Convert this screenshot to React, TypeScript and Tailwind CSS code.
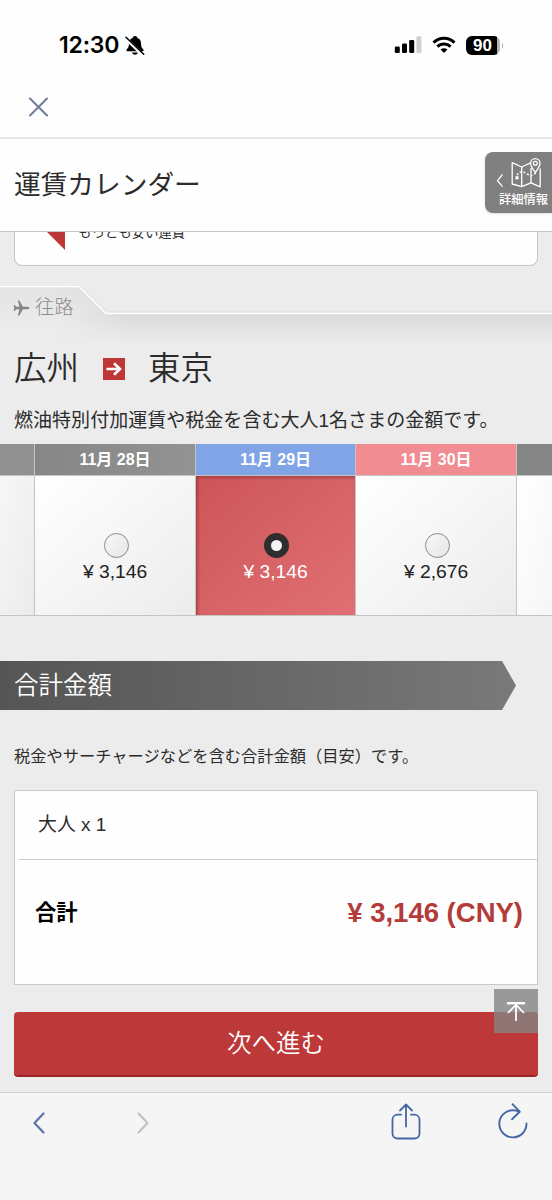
import { clsx } from 'clsx';
import type { ReactNode } from 'react';

interface FareDay {
  id: string;
  label: string;
  price: string;
  headerClass: string;
  bodyClass: string;
  selected?: boolean;
}

const fareDays: FareDay[] = [
  { id: 'prev', label: '', price: '', headerClass: 'bg-[#919191]', bodyClass: 'from-[#f7f7f7] to-[#ebebeb]' },
  {
    id: '28',
    label: '11月 28日',
    price: '¥ 3,146',
    headerClass: 'bg-linear-to-r from-[#868686] to-[#939393]',
    bodyClass: 'from-white to-[#ececec] text-[#222]',
  },
  {
    id: '29',
    label: '11月 29日',
    price: '¥ 3,146',
    headerClass: 'bg-[#80a4e6]',
    bodyClass: 'from-[#cd5558] to-[#e07074] text-white shadow-[inset_2px_2px_3px_rgba(90,20,20,0.35)]',
    selected: true,
  },
  {
    id: '30',
    label: '11月 30日',
    price: '¥ 2,676',
    headerClass: 'bg-[#f08c92]',
    bodyClass: 'from-white to-[#ececec] text-[#222]',
  },
  { id: 'next', label: '', price: '', headerClass: 'bg-[#868686]', bodyClass: 'from-white to-[#f6f6f6]' },
];

function StatusBar() {
  return (
    <div className="flex h-[76px] items-start justify-between bg-[#fefefe] pt-[33px] pr-[49px] pl-[59px]">
      <div className="flex h-6 items-center gap-[6px]">
        <span className="font-['Inter',sans-serif] text-[23px] font-semibold tracking-[-0.2px] text-black">12:30</span>
        <svg width="20" height="21" viewBox="0 0 20 21">
          <path
            d="M10 1c-1.300 0-2.200.8-2.400 1.900C5.200 3.800 4 5.700 4 8.200c0 3.600-.9 4.800-2.200 6.100-.8.8-.6 2 .7 2h15c1.300 0 1.500-1.200.7-2-1.300-1.300-2.200-2.500-2.200-6.100 0-2.500-1.200-4.400-3.600-5.300C12.200 1.800 11.300 1 10 1zM7.100 17.500c.3 1.400 1.400 2.200 2.900 2.200s2.600-.8 2.900-2.200z"
            fill="#000"
          />
          <path d="M0.500 3.200L18 20.200" stroke="#fefefe" strokeWidth="3.200" />
          <path d="M1 2.200L18.700 19.300" stroke="#000" strokeWidth="1.500" strokeLinecap="round" />
        </svg>
      </div>
      <div className="flex h-6 items-center">
        <svg width="28" height="18" viewBox="0 0 28 18">
          <rect x="0.800" y="10.500" width="5" height="6.500" rx="1.300" fill="#000" />
          <rect x="8" y="7.500" width="5" height="9.500" rx="1.300" fill="#000" />
          <rect x="15.200" y="4" width="5" height="13" rx="1.300" fill="#000" />
          <rect x="22.400" y="0.200" width="5" height="16.800" rx="1.300" fill="#cfcfcf" />
        </svg>
        <svg className="ml-2.5" width="24" height="18" viewBox="0 0 24 18">
          <g fill="none" stroke="#000" strokeWidth="3">
            <path d="M1.500 6.600C7.300 0.900 16.700 0.900 22.500 6.600" />
            <path d="M5.400 10.600C9 7.100 15 7.100 18.600 10.600" />
          </g>
          <path d="M8.500 13.500C10.500 11.700 13.500 11.700 15.500 13.500L12 17.100z" fill="#000" />
        </svg>
        <div className="ml-2.5 flex h-[19px] w-[34px] items-center justify-center rounded-[6px] bg-linear-to-r from-black from-92% to-[#b5b5b5] to-92%">
          <span className="pt-px text-[17px] leading-none font-bold text-white">90</span>
        </div>
        <div className="ml-[2px] h-[5px] w-[1.500px] rounded-r-full bg-[#a8a8a8]" />
      </div>
    </div>
  );
}

function DetailTab() {
  return (
    <button className="mt-[13px] flex h-[61px] w-[67px] flex-col rounded-l-[8px] bg-[#808080] pl-[10px] shadow-sm">
      <svg width="54" height="38" viewBox="0 0 54 38" fill="none" stroke="#fff">
        <path d="M7.500 22.500L2.500 28.700l5 6" strokeWidth="1.200" />
        <g strokeWidth="1.300" strokeLinejoin="round">
          <path d="M35.500 10.800L26.700 15 17.200 10.700V32l9.500 2.700 9.300-3.900 9.200 4V16.500" />
          <path d="M26.700 15v19.500M36 16v15" />
          <path d="M40.300 20.500c-2.800-4.200-4.700-6.600-4.700-9.100a4.700 4.700 0 0 1 9.400 0c0 2.500-1.900 4.900-4.700 9.100z" fill="#808080" />
          <circle cx="40.300" cy="11.300" r="1.900" />
        </g>
        <path d="M22 23l2.500-2.800 3.500-.7 4 2.500 4 1.800 5.500-3" strokeWidth="1.500" strokeDasharray="2 2" />
        <path d="M20.600 24.400l2.800 2.800m0-2.800l-2.800 2.800" strokeWidth="1.500" />
      </svg>
      <span className="mt-px text-[12.300px] leading-[18px] font-medium whitespace-nowrap text-white">詳細情報</span>
    </button>
  );
}

function RouteTab() {
  return (
    <div className="relative h-[58px]">
      <svg className="absolute inset-0" width="552" height="58" viewBox="0 0 552 58" fill="none">
        <defs>
          <linearGradient id="fade" x1="0" y1="27" x2="0" y2="58" gradientUnits="userSpaceOnUse">
            <stop stopColor="#dadada" />
            <stop offset="1" stopColor="#ececec" />
          </linearGradient>
          <linearGradient id="tabFade" x1="62" y1="38" x2="86" y2="10" gradientUnits="userSpaceOnUse">
            <stop stopColor="#dcdcdc" stopOpacity="0" />
            <stop offset="1" stopColor="#dcdcdc" />
          </linearGradient>
          <linearGradient id="topFade" x1="0" y1="0" x2="0" y2="40" gradientUnits="userSpaceOnUse">
            <stop stopColor="#e3e3e3" />
            <stop offset="1" stopColor="#ececec" />
          </linearGradient>
          <linearGradient id="sideMask" x1="60" y1="0" x2="125" y2="0" gradientUnits="userSpaceOnUse">
            <stop stopColor="#000" />
            <stop offset="1" stopColor="#fff" />
          </linearGradient>
          <mask id="side" maskUnits="userSpaceOnUse" x="0" y="0" width="552" height="58">
            <rect width="552" height="58" fill="url(#sideMask)" />
          </mask>
        </defs>
        <path d="M0 0H79L106 27V58H0z" fill="url(#topFade)" />
        <path d="M0 0H79L106 27H0z" fill="url(#tabFade)" mask="url(#side)" />
        <path d="M0 27H552V58H0z" fill="url(#fade)" mask="url(#side)" />
        <path d="M0 -1H80L107 26H552" stroke="#dfdfdf" />
        <path d="M0 0.500H79L106 27.500H552" stroke="#fff" strokeWidth="1.500" />
      </svg>
      <div className="relative flex h-[43px] items-center pl-[13px] text-[19.300px] font-light text-[#8c8c8c]">
        <svg className="mr-[5px]" width="17" height="18" viewBox="0 0 17 18">
          <path
            d="M16.500 9c0-.8-1.400-1.200-3-1.200H10L6.300 1.500H4.800l1.700 6.300H3.200L1.600 6H.6l.7 3-.7 3h1l1.600-1.800h3.300L4.800 16.500h1.500L10 10.200h3.500c1.600 0 3-.4 3-1.200z"
            fill="#858585"
          />
        </svg>
        <span className="pt-[2px]">往路</span>
      </div>
    </div>
  );
}

function Radio({ checked }: { checked?: boolean }) {
  if (checked) {
    return (
      <span className="flex size-[25px] items-center justify-center rounded-full bg-[#2e2e2e]">
        <span className="size-[11px] rounded-full bg-[#f4f4f4]" />
      </span>
    );
  }
  return <span className="size-[25px] rounded-full border border-[#8a8a8a] bg-linear-to-br from-[#f8f8f8] to-[#e6e6e6]" />;
}

function FareCell({ day }: { day: FareDay }) {
  return (
    <div className="border-r border-[#c4c4c4] last:border-r-0">
      <div className={clsx('flex h-[31px] items-center justify-center pt-px text-[16px] font-bold text-white', day.headerClass)}>
        {day.label}
      </div>
      <div className={clsx('flex h-[141px] flex-col items-center border-y border-[#c4c4c4] bg-linear-to-br pt-[57px]', day.bodyClass)}>
        {day.price ? (
          <>
            <span className="ml-[2px] flex">
              <Radio checked={day.selected} />
            </span>
            <span className="mt-[2px] text-[19.250px] leading-6">{day.price}</span>
          </>
        ) : null}
      </div>
    </div>
  );
}

function Note({ className, children }: { className: string; children: ReactNode }) {
  return <p className={clsx('flex items-center pl-[14px] whitespace-nowrap text-[#2b2b2b]', className)}>{children}</p>;
}

function BrowserBar() {
  return (
    <div className="flex h-[108px] items-start border-t border-[#d2d2d2] bg-[#f5f5f6] pt-[8px]">
      <svg className="ml-[32px]" width="14" height="44" viewBox="0 0 14 44" fill="none">
        <path d="M11.500 12.500L2.500 22l9 9.500" stroke="#5c76ab" strokeWidth="2.300" strokeLinecap="round" strokeLinejoin="round" />
      </svg>
      <svg className="ml-[90px]" width="14" height="44" viewBox="0 0 14 44" fill="none">
        <path d="M2.500 12.500l9 9.500-9 9.500" stroke="#c3c3c4" strokeWidth="2.300" strokeLinecap="round" strokeLinejoin="round" />
      </svg>
      <svg className="ml-[240px]" width="32" height="44" viewBox="0 0 32 44" fill="none" stroke="#4467a4" strokeWidth="1.800">
        <path d="M11.800 13.700H7.500a5 5 0 0 0-5 5V32.500a5 5 0 0 0 5 5h17a5 5 0 0 0 5-5V18.700a5 5 0 0 0-5-5h-4.300" />
        <path d="M16 25.500V4M10 9.500l6-6 6 6" strokeLinecap="round" strokeLinejoin="round" />
      </svg>
      <svg className="ml-[75px]" width="32" height="44" viewBox="0 0 32 44" fill="none" stroke="#4467a4" strokeWidth="1.900">
        <path d="M29.500 22.500A13.600 13.600 0 1 1 16 9.200c2.300 0 4.300.5 6.300 1.600" strokeLinecap="round" />
        <path d="M15.500 3.200l7.200 7.500-7.700 7.500" strokeLinecap="round" strokeLinejoin="round" />
      </svg>
    </div>
  );
}

export default function App() {
  return (
    <div className="flex h-[1200px] w-[552px] flex-col overflow-hidden bg-[#ececec] font-['Liberation_Sans','Noto_Sans_CJK_JP',sans-serif] text-[#2b2b2b]">
      <StatusBar />
      <div className="h-[63px] border-b-2 border-[#e5e5e5] bg-[#fefefe] pt-[21px] pl-[28px]">
        <svg width="21" height="20" viewBox="0 0 21 20">
          <path d="M2 1.500l17 17M19 1.500l-17 17" stroke="#6f7c96" strokeWidth="2" strokeLinecap="round" />
        </svg>
      </div>

      <header className="flex h-[93px] justify-between border-b border-[#c6c6c6] bg-[#fefefe] pl-[14px]">
        <h1 className="flex h-[92px] items-center text-[26.700px]">運賃カレンダー</h1>
        <DetailTab />
      </header>

      <div className="mx-[14px] flex h-[34px] rounded-b-[8px] border border-t-0 border-[#c6c6c6] bg-[#fefefe] pl-[32px]">
        <svg width="18" height="18" viewBox="0 0 18 18">
          <path d="M0 0h18v18z" fill="#bf3636" />
        </svg>
        <div className="h-[12px] overflow-hidden pl-[13px]">
          <p className="-mt-[9px] text-[13.400px] leading-5">もっとも安い運賃</p>
        </div>
      </div>

      <div className="pt-[20px]">
        <RouteTab />
      </div>

      <div className="flex h-[48px] items-center pl-[14px] text-[32.500px] font-[350] text-[#2b2b2b]">
        <span className="pt-[3px]">広州</span>
        <span className="mt-[2px] ml-[24px] flex size-[22px] items-center justify-center bg-[#bf3636]">
          <svg width="16" height="14" viewBox="0 0 16 14" fill="none" stroke="#fff" strokeWidth="2.600">
            <path d="M0.500 7H14M8 1.200L14 7l-6 5.800" />
          </svg>
        </span>
        <span className="ml-[23px] pt-[3px]">東京</span>
      </div>
      <Note className="h-[52px] pt-[7px] text-[19.050px]">燃油特別付加運賃や税金を含む大人1名さまの金額です。</Note>

      <div className="grid h-[172px] grid-cols-[35px_161px_160px_161px_35px]">
        {fareDays.map((day) => (
          <FareCell key={day.id} day={day} />
        ))}
      </div>

      <h2 className="mt-[45px] flex h-[49px] w-[516px] items-center bg-linear-to-r from-[#555] to-[#797979] pt-[2px] pl-[14px] text-[24.500px] font-[350] text-white [clip-path:polygon(0_0,502px_0,100%_50%,502px_100%,0_100%)]">
        合計金額
      </h2>
      <Note className="h-[80px] pt-[12px] text-[16.250px]">税金やサーチャージなどを含む合計金額（目安）です。</Note>

      <div className="mx-[14px] h-[195px] border border-[#c9c9c9] bg-[#fefefe]">
        <div className="ml-[4px] flex h-[69px] items-center border-b border-[#c9c9c9] pt-px pl-[19px] text-[18.900px]">大人 x 1</div>
        <div className="flex h-[106px] items-center justify-between pr-[14px] pl-[20px] font-bold">
          <span className="pt-[2px] text-[21.300px] text-black">合計</span>
          <span className="text-[27.500px] text-[#b33b38]">¥ 3,146 (CNY)</span>
        </div>
      </div>

      <div className="relative mx-[14px] mt-[27px] mb-[15px]">
        <button className="flex h-[65px] w-full items-center justify-center rounded-[4px] border-b-2 border-[#982426] bg-[#bd3939] pt-[2px] text-[24.500px] font-[350] text-white">
          次へ進む
        </button>
        <button className="absolute -top-[23px] right-0 flex size-[44px] items-center justify-center bg-[#848484]/80">
          <svg width="20" height="22" viewBox="0 0 20 22" fill="none" stroke="#fff">
            <path d="M1 3.200h18" strokeWidth="2.400" />
            <path d="M10 4v17M2 13l8-8.300 8 8.300" strokeWidth="1.800" />
          </svg>
        </button>
      </div>

      <BrowserBar />
    </div>
  );
}
